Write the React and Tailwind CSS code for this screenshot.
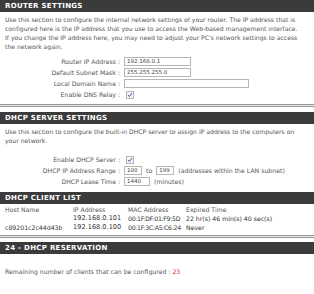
import React from "react";

const font = { fontFamily: "Tahoma, 'DejaVu Sans', Verdana, sans-serif" };

const SectionHeader = ({ title }) => (
  <div className="h-[12px] bg-[#3b3b3b] text-white font-bold text-[7px] tracking-[0.3px] leading-[12px] pl-[5px] uppercase">
    {title}
  </div>
);

const Row = ({ label, children }) => (
  <div className="flex items-center h-[11px]">
    <div className="w-[124px] text-right pr-[4px] text-[6.2px] text-[#555] whitespace-nowrap">{label} :</div>
    <div className="flex items-center gap-[4px] text-[6.2px] text-[#555] whitespace-nowrap">{children}</div>
  </div>
);

const Field = ({ value, w }) => (
  <div className={`h-[9px] border border-[#b5b5b5] bg-white text-[5.5px] leading-[7px] pl-[2px] text-[#444] ${w}`}>
    {value}
  </div>
);

const Check = () => (
  <div className="ml-[2px] w-[8px] h-[8px] border border-[#b5b5b5] bg-[#f4f4f4] flex items-center justify-center">
    <svg width="6" height="6" viewBox="0 0 6 6">
      <path d="M1 3 L2.4 4.6 L5 1" stroke="#3b5ea0" strokeWidth="1" fill="none" />
    </svg>
  </div>
);

const Separator = () => (
  <div className="border-t border-b border-[#9a9a9a] h-[3px] bg-[#e6e6e6]" />
);

export default function App() {
  const clients = [
    { host: "", ip: "192.168.0.101", mac: "00:1F:DF:01:F9:5D", exp: "22 hr(s) 46 min(s) 40 sec(s)" },
    { host: "c89201c2c44d43b", ip: "192.168.0.100", mac: "00:1F:3C:A5:C6:24", exp: "Never" },
  ];

  return (
    <div className="w-[314px] h-[294px] bg-white overflow-hidden" style={font}>
      <SectionHeader title="Router Settings" />
      <p className="px-[5px] pt-[3px] text-[6.1px] leading-[9px] text-[#555] whitespace-nowrap">
        Use this section to configure the internal network settings of your router. The IP address that is
        <br />
        configured here is the IP address that you use to access the Web-based management interface.
        <br />
        If you change the IP address here, you may need to adjust your PC's network settings to access
        <br />
        the network again.
      </p>
      <div className="mt-[5px]">
        <Row label="Router IP Address">
          <Field value="192.168.0.1" w="w-[67px]" />
        </Row>
        <Row label="Default Subnet Mask">
          <Field value="255.255.255.0" w="w-[67px]" />
        </Row>
        <Row label="Local Domain Name">
          <Field value="" w="w-[125px]" />
        </Row>
        <Row label="Enable DNS Relay">
          <Check />
        </Row>
      </div>
      <div className="mt-[4px] mb-[5px]">
        <Separator />
      </div>

      <SectionHeader title="DHCP Server Settings" />
      <p className="px-[5px] pt-[3px] text-[6.1px] leading-[9px] text-[#555] whitespace-nowrap">
        Use this section to configure the built-in DHCP server to assign IP address to the computers on
        <br />
        your network.
      </p>
      <div className="mt-[9px]">
        <Row label="Enable DHCP Server">
          <Check />
        </Row>
        <Row label="DHCP IP Address Range">
          <Field value="100" w="w-[18px]" />
          <span>to</span>
          <Field value="199" w="w-[18px]" />
          <span>(addresses within the LAN subnet)</span>
        </Row>
        <Row label="DHCP Lease Time">
          <Field value="1440" w="w-[26px]" />
          <span>(minutes)</span>
        </Row>
      </div>

      <div className="mt-[5px]">
        <SectionHeader title="DHCP Client List" />
      </div>
      <table className="mt-[1px] table-fixed w-[314px] text-[6.2px] leading-[9px] text-[#555] border-collapse whitespace-nowrap">
        <colgroup>
          <col className="w-[73px]" />
          <col className="w-[55px]" />
          <col className="w-[58px]" />
          <col />
        </colgroup>
        <thead>
          <tr>
            <td className="pl-[5px]">Host Name</td>
            <td>IP Address</td>
            <td>MAC Address</td>
            <td>Expired Time</td>
          </tr>
        </thead>
        <tbody className="text-[#333]">
          {clients.map((c, i) => (
            <tr key={i}>
              <td className="pl-[5px]">{c.host}</td>
              <td className="text-[6.6px]">{c.ip}</td>
              <td className="tracking-[-0.3px]">{c.mac}</td>
              <td>{c.exp}</td>
            </tr>
          ))}
        </tbody>
      </table>
      <div className="mt-[3px] mb-[4px]">
        <Separator />
      </div>

      <SectionHeader title="24 - DHCP Reservation" />
      <p className="px-[5px] pt-[13px] text-[6.2px] leading-[9px] text-[#555]">
        Remaining number of clients that can be configured : <span className="text-[#d22]">23</span>
      </p>
    </div>
  );
}
